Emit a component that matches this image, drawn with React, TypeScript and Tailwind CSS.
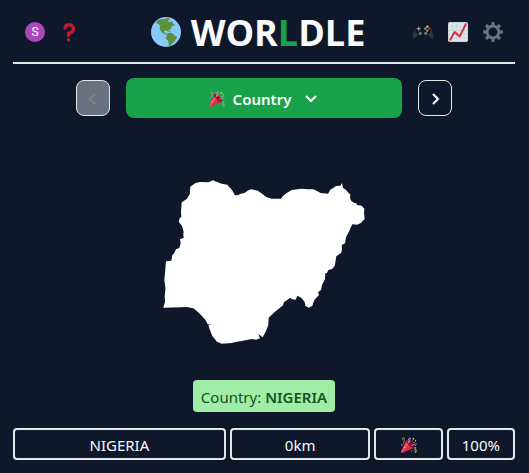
import type { ReactNode } from "react";

function GlobeIcon() {
  return (
    <svg viewBox="60 47 91 91" className="size-[30px]" aria-hidden="true">
      <circle cx="105.500" cy="92.500" r="45.500" fill="#88c9f9" />
      <path
        fill="#5c913b"
        d="M76 65L79 59L84 55L93 53L98 54L103 53L107 50L115 51L118 54L114 56L111 60L117 63L120 60L126 63L127 67L131 70L130 74L124 74L121 78L123 82L118 84L113 89L109 91L107 88L102 88L99 92L103 96L107 95L106 99L112 101L108 102L101 98L95 96L89 88L86 81L88 77L85 70L81 67L76 67Z"
      />
      <path
        fill="#5c913b"
        d="M109 98L115 95L123 96L128 99L131 103L138 106L139 110L134 115L132 121L126 125L122 131L118 135L114 136L114 129L112 120L106 114L105 108L108 104Z"
      />
      <path fill="#5c913b" d="M114 89L120 91L118 93L112 91Z" />
    </svg>
  );
}

function QuestionIcon() {
  return (
    <svg viewBox="0 0 36 36" className="size-5" fill="#be1931" aria-hidden="true">
      <path d="M17 27c-1.657 0-3-1.343-3-3v-4c0-1.657 1.343-3 3-3 .603-.006 6-1 6-5 0-2-2-4-5-4-2.441 0-4 2-4 3 0 1.657-1.343 3-3 3s-3-1.343-3-3c0-4.878 4.580-9 10-9 8 0 11 5.982 11 11 0 4.145-2.277 7.313-6.413 8.920-.9.351-1.790.587-2.587.747V24c0 1.657-1.343 3-3 3z" />
      <circle cx="17" cy="32" r="3" />
    </svg>
  );
}

function GamepadIcon() {
  return (
    <svg viewBox="66 67 60 60" className="size-5" aria-hidden="true">
      <path
        fill="#31373d"
        d="M66 117C66 104 68 92 73 83L85 80H107L119 83C124 92 126 104 126 117C120 117 115 111 111 106L104 100H88L81 106C77 112 72 117 66 117Z"
      />
      <path
        fill="#141719"
        d="M72 87C73 80 77 77 83 77L90 80H102L109 77C115 77 119 80 120 87L119 99L111 105L104 101H88L81 105L73 99Z"
      />
      <path fill="#8899a6" d="M81 81h4v4h4v4h-4v4h-4v-4h-4v-4h4z" />
      <circle cx="88" cy="101" r="5" fill="#66757f" />
      <circle cx="104" cy="101" r="5" fill="#66757f" />
      <circle cx="109" cy="81" r="3.500" fill="#ffcc4d" />
      <circle cx="115" cy="87" r="3.500" fill="#dd2e44" />
      <circle cx="109" cy="93" r="3.500" fill="#77b255" />
      <circle cx="103" cy="87" r="3.500" fill="#55acee" />
    </svg>
  );
}

function ChartIcon() {
  return (
    <svg viewBox="0 0 36 36" className="size-5" aria-hidden="true">
      <rect width="36" height="36" rx="3" fill="#ccd6dd" />
      <rect x="2" y="2" width="32" height="32" rx="1" fill="#e1e8ed" />
      <path
        d="M8 2v32M15 2v32M22 2v32M29 2v32M2 8h32M2 15h32M2 22h32M2 29h32"
        stroke="#ccd6dd"
        strokeWidth="2"
      />
      <path
        d="M4 32L12 18L21 26L32 4"
        fill="none"
        stroke="#dd2e44"
        strokeWidth="3.500"
        strokeLinecap="round"
        strokeLinejoin="round"
      />
    </svg>
  );
}

function GearIcon() {
  return (
    <svg viewBox="0 0 36 36" className="size-5" fill="#66757f" aria-hidden="true">
      <path d="M34 15h-3.362c-.324-1.369-.864-2.651-1.582-3.814l2.379-2.379c.781-.781.781-2.048 0-2.829l-1.414-1.414c-.781-.781-2.047-.781-2.828 0l-2.379 2.379C23.650 6.225 22.369 5.686 21 5.362V2c0-1.104-.896-2-2-2h-2c-1.104 0-2 .896-2 2v3.362c-1.369.324-2.651.864-3.814 1.582L8.808 4.565c-.781-.781-2.048-.781-2.828 0L4.565 5.979c-.781.781-.781 2.048-.001 2.829l2.379 2.379C6.225 12.350 5.686 13.632 5.362 15H2c-1.104 0-2 .896-2 2v2c0 1.104.896 2 2 2h3.362c.324 1.368.864 2.650 1.582 3.813l-2.379 2.379c-.78.78-.78 2.048.001 2.829l1.414 1.414c.78.78 2.047.78 2.828 0l2.379-2.379c1.163.719 2.445 1.258 3.814 1.582V34c0 1.104.896 2 2 2h2c1.104 0 2-.896 2-2v-3.362c1.368-.324 2.650-.864 3.813-1.582l2.379 2.379c.781.781 2.047.781 2.828 0l1.414-1.414c.781-.781.781-2.048 0-2.829l-2.379-2.379c.719-1.163 1.258-2.445 1.582-3.814H34c1.104 0 2-.896 2-2v-2C36 15.896 35.104 15 34 15zM18 26c-4.418 0-8-3.582-8-8s3.582-8 8-8 8 3.582 8 8-3.582 8-8 8z" />
    </svg>
  );
}

function PartyIcon() {
  return (
    <svg viewBox="0 0 36 36" className="size-4" aria-hidden="true">
      <path fill="#DD2E44" d="M11.626 7.488c-.112.112-.197.247-.268.395l-.008-.008L.134 33.141l.011.011c-.208.403.14 1.223.853 1.937.713.713 1.533 1.061 1.936.853l.01.01L28.21 24.735l-.008-.009c.147-.07.282-.155.395-.269 1.562-1.562-.971-6.627-5.656-11.313-4.687-4.686-9.752-7.218-11.315-5.656z" />
      <path fill="#EA596E" d="M13 12L.416 32.506l-.282.635.011.011c-.208.403.14 1.223.853 1.937.232.232.473.408.709.557L17 17l-4-5z" />
      <path fill="#A0041E" d="M23.012 13.066c4.67 4.672 7.263 9.652 5.789 11.124-1.473 1.474-6.453-1.118-11.126-5.788-4.671-4.672-7.263-9.654-5.79-11.127 1.474-1.473 6.454 1.119 11.127 5.791z" />
      <path fill="#AA8DD8" d="M18.59 13.609c-.199.161-.459.245-.734.215-.868-.094-1.598-.396-2.109-.873-.541-.505-.808-1.183-.735-1.862.128-1.192 1.324-2.286 3.363-2.066.793.085 1.147-.17 1.159-.292.014-.121-.277-.446-1.07-.532-.868-.094-1.598-.396-2.11-.873-.541-.505-.809-1.183-.735-1.862.13-1.192 1.325-2.286 3.362-2.065.578.062.883-.057 1.012-.134.103-.063.144-.123.148-.158.012-.121-.275-.446-1.07-.532-.549-.06-.947-.552-.886-1.102.059-.549.55-.946 1.101-.886 2.037.219 2.973 1.542 2.844 2.735-.13 1.194-1.325 2.286-3.364 2.067-.578-.063-.88.057-1.01.134-.103.062-.145.123-.149.157-.013.122.276.446 1.071.532 2.037.22 2.973 1.542 2.844 2.735-.129 1.192-1.324 2.286-3.362 2.065-.578-.062-.882.058-1.012.134-.104.064-.144.124-.148.158-.013.121.276.446 1.07.532.548.06.947.553.886 1.102-.028.274-.167.511-.366.671z" />
      <path fill="#77B255" d="M30.661 22.857c1.973-.557 3.334.323 3.658 1.478.324 1.154-.378 2.615-2.35 3.17-.77.216-1.001.584-.97.701.034.118.425.312 1.193.095 1.972-.555 3.333.325 3.657 1.479.326 1.155-.378 2.614-2.351 3.17-.769.216-1.001.585-.967.702.033.117.423.311 1.192.095.53-.149 1.084.16 1.233.691.148.532-.161 1.084-.693 1.234-1.971.555-3.333-.323-3.659-1.479-.324-1.154.379-2.613 2.353-3.169.77-.217 1.001-.584.967-.702-.032-.117-.422-.312-1.19-.096-1.974.556-3.334-.322-3.659-1.479-.325-1.154.378-2.613 2.351-3.17.768-.215.999-.585.967-.701-.034-.118-.423-.312-1.192-.096-.532.15-1.083-.16-1.233-.691-.149-.53.161-1.082.693-1.232z" />
      <path fill="#AA8DD8" d="M23.001 20.16c-.294 0-.584-.129-.782-.375-.345-.432-.274-1.061.156-1.406.218-.175 5.418-4.259 12.767-3.208.547.078.927.584.849 1.131-.078.546-.58.93-1.132.848-6.493-.922-11.187 2.754-11.233 2.791-.186.148-.406.219-.625.219z" />
      <path fill="#77B255" d="M5.754 16c-.095 0-.192-.014-.288-.042-.529-.159-.829-.716-.67-1.245 1.133-3.773 2.16-9.794.898-11.364-.141-.178-.354-.353-.842-.316-.938.072-.849 2.051-.848 2.071.042.551-.372 1.031-.922 1.072-.559.034-1.031-.372-1.072-.923-.103-1.379.326-4.035 2.692-4.214 1.056-.08 1.933.287 2.552 1.057 2.371 2.951-.036 11.506-.542 13.192-.13.433-.528.712-.958.712z" />
      <g fill="#5C913B">
        <circle cx="25.500" cy="9.500" r="1.500" />
        <circle cx="32.500" cy="19.500" r="1.500" />
        <circle cx="23.500" cy="31.500" r="1.500" />
      </g>
      <circle cx="2" cy="18" r="2" fill="#9266CC" />
      <g fill="#FFCC4D">
        <circle cx="28" cy="4" r="2" />
        <circle cx="32.500" cy="8.500" r="1.500" />
        <circle cx="29.500" cy="12.500" r="1.500" />
        <circle cx="7.500" cy="23.500" r="1.500" />
      </g>
    </svg>
  );
}

function Chevron({ d }: { d: string }) {
  return (
    <svg
      viewBox="0 0 16 16"
      className="size-4"
      fill="none"
      stroke="currentColor"
      strokeWidth="2"
      aria-hidden="true"
    >
      <path d={d} />
    </svg>
  );
}

function NigeriaShape() {
  return (
    <svg viewBox="163 180 203 165" className="w-[203px]" role="img" aria-label="Country outline">
      <path
        fill="#fff"
        d="M165.300 269.700L166 261.300L171.300 260.700L172.300 255L174 253.500L176 249.300L179.300 248L180.700 243.300L180 239.300L183.700 237.700L183.200 234L183.700 232L182 226L178.700 221.700L179.500 218.500L181.300 216.700L181 212L181.700 202.300L186.700 199L189.700 194.300L190.300 186.700L192 185.500L195.700 183L200 182L208.300 182.300L213 180.300L217 182L221.700 183.700L227.300 184.700L232 190L235 195.300L238 195.300L240 194L244.300 193L248 190.500L251.300 189.300L257.700 190.700L261 193L264.700 195.700L266.700 197.300L271.700 198.700L281 198.700L283 196L286.700 193L291.700 190L301.700 188.700L308 189.300L313.300 189.300L317 191L320.700 193L328 193.700L330.700 189.300L332.500 188.500L336 186L340.300 185.700L342 183L343 187.700L346 190L349 193.500L350.300 194.300L350 198L351.300 201L354.300 203L356 203L357 205L361.700 205.700L364.300 208.700L364 213L364.700 219L363 220.500L361.300 222.700L357.300 224.700L352.300 224.300L350.500 228L349.300 231L346 237.300L345 243.300L341.700 245.300L342 249L341.300 252.700L336.300 256.300L335.700 260L334.700 266L332 269L328.300 270L327 273L325.300 273.300L325 279.300L322 285L321 290L318 292.300L319 295L314.300 300L312.300 306L308.700 307.700L305.300 305.700L304.700 302L301.300 297.700L297.300 295.700L295.700 299.700L292 299.300L290 297.700L288 299.500L284 302L283 305.300L275 311.700L268.700 317.700L268.300 325L266 331L262.700 337.300L258.300 334L260 338.300L256 339.700L252 339L248 339.800L245 340.300L242 341L236.700 341.700L231.700 343L221.700 343.700L217 341.700L212.300 336L209.300 328.300L208.500 325L212 324.500L207.700 324.300L205.500 320L201.700 315.700L198 312L193.300 308.300L186.700 307L180 307.300L163.300 307.700L165 301.700L164.700 296L165.500 288L164.300 280Z"
      />
    </svg>
  );
}

function IconButton({ label, children }: { label: string; children: ReactNode }) {
  return (
    <button type="button" aria-label={label}>
      {children}
    </button>
  );
}

function ResultCell({ className, children }: { className: string; children: ReactNode }) {
  return (
    <li
      className={`flex h-8 items-center justify-center rounded border-2 border-gray-200 pt-0.5 ${className}`}
    >
      {children}
    </li>
  );
}

export default function App() {
  return (
    <div className="min-h-screen bg-slate-900 pr-[14px] pb-3 pl-[13px] font-['Noto_Sans',sans-serif] text-[15px] leading-6 text-slate-50">
      <header className="flex h-16 items-center justify-between border-b-2 border-gray-200 px-3 pt-0.5">
        <div className="flex items-center gap-3.5 pr-6">
          <button
            type="button"
            aria-label="Profile"
            className="flex size-5 items-center justify-center rounded-full bg-[#ab47bc] font-[Roboto,sans-serif] text-xs text-white"
          >
            S
          </button>
          <IconButton label="How to play">
            <QuestionIcon />
          </IconButton>
        </div>
        <h1 className="flex items-center gap-2.5 font-['Open_Sans',sans-serif] text-4xl font-bold">
          <GlobeIcon />
          <span className="pt-0.5">
            WOR<span className="text-[#18a34a]">L</span>DLE
          </span>
        </h1>
        <div className="flex items-center gap-[15px]">
          <IconButton label="Other games">
            <GamepadIcon />
          </IconButton>
          <IconButton label="Statistics">
            <ChartIcon />
          </IconButton>
          <IconButton label="Settings">
            <GearIcon />
          </IconButton>
        </div>
      </header>

      <main>
        <nav className="mx-auto mt-3.5 flex w-3/4 items-center gap-4">
          <button
            type="button"
            disabled
            aria-label="Previous round"
            className="flex h-9 w-[34px] items-center justify-center rounded-lg border border-gray-200 bg-gray-500 text-[#85827e]"
          >
            <Chevron d="M10 4L5 9L10 14" />
          </button>
          <button
            type="button"
            className="flex h-10 flex-1 items-center justify-center gap-2 rounded-lg bg-[#18a34a] pt-0.5 font-semibold text-white"
          >
            <PartyIcon />
            Country
            <span className="ml-1">
              <Chevron d="M3 5L8 10L13 5" />
            </span>
          </button>
          <button
            type="button"
            aria-label="Next round"
            className="flex h-9 w-[34px] items-center justify-center rounded-lg border border-gray-200 text-white"
          >
            <Chevron d="M6 4L11 9L6 14" />
          </button>
        </nav>

        <div className="mt-[62px] flex justify-center">
          <NigeriaShape />
        </div>

        <p className="mx-auto mt-[35px] w-fit rounded bg-[#a0eda7] px-2 pt-[5px] pb-[3px] text-[#14531f]">
          Country: <b className="font-semibold">NIGERIA</b>
        </p>

        <ul className="mt-4 grid grid-cols-7 gap-1">
          <ResultCell className="col-span-3">NIGERIA</ResultCell>
          <ResultCell className="col-span-2">0km</ResultCell>
          <ResultCell className="col-span-1">
            <PartyIcon />
          </ResultCell>
          <ResultCell className="col-span-1">100%</ResultCell>
        </ul>
      </main>
    </div>
  );
}
